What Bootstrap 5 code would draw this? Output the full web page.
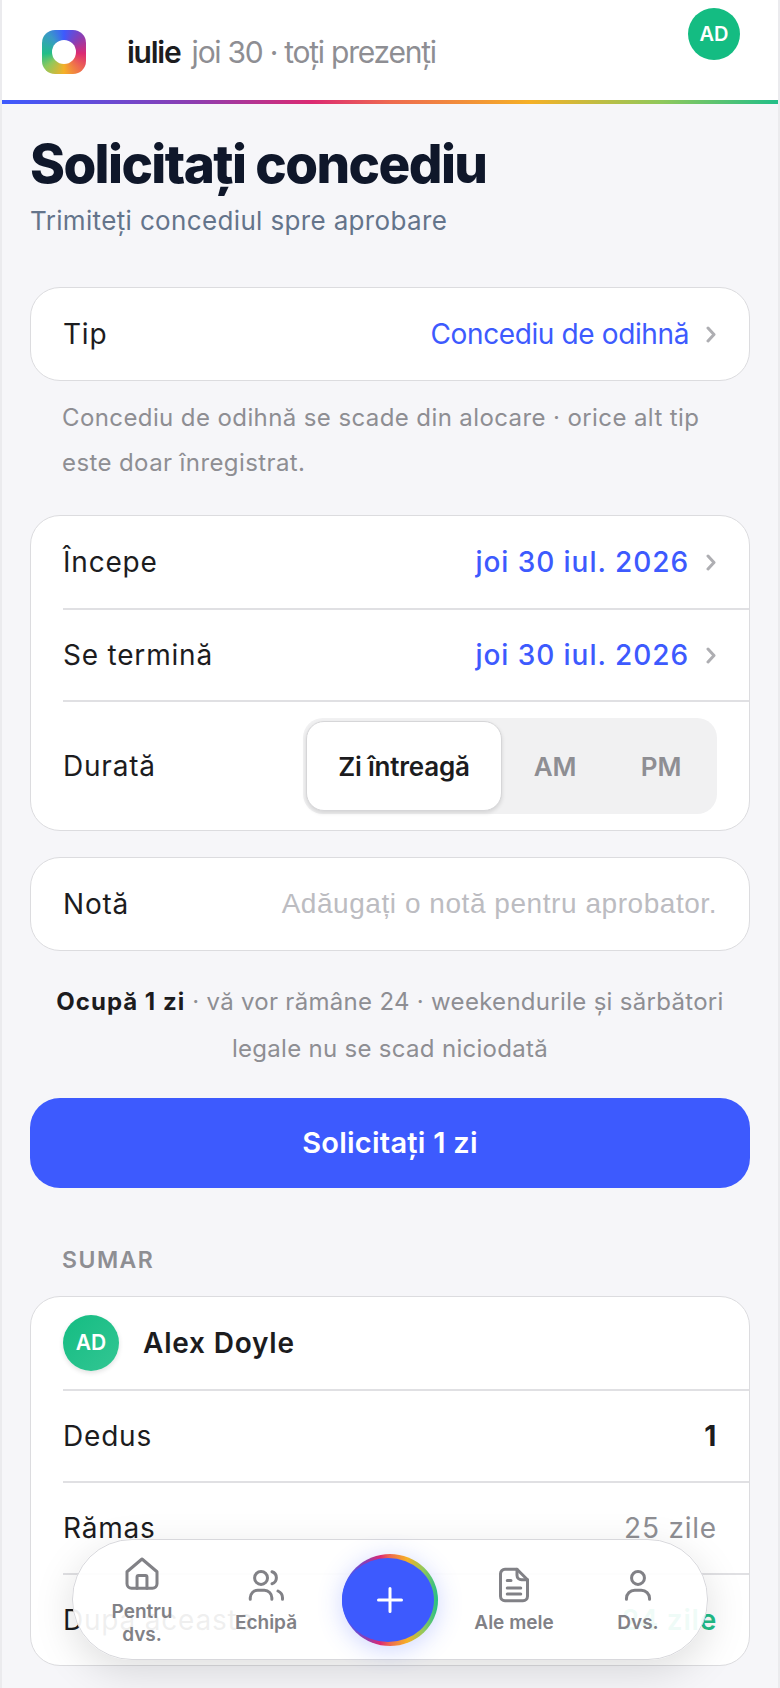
<!DOCTYPE html>
<html lang="ro">
<head>
    <meta charset="UTF-8">
    <title>Solicitați concediu</title>
    <link href="https://cdn.jsdelivr.net/npm/bootstrap@5.3.2/dist/css/bootstrap.min.css" rel="stylesheet">
    <style>
        html, body {
            height: 1688px;
            overflow: hidden;
        }
        body {
            background-color: #ebebee;
            font-family: Inter, "Liberation Sans", sans-serif;
            color: #1c1c1e;
            position: relative;
        }
        .page-shell {
            margin: 0 2px;
            height: 1688px;
            background: #f6f6f9;
        }
        .top-strip {
            height: 100px;
            background: #fff;
            padding: 0 38px 0 40px;
        }
        .brand-mark {
            width: 44px;
            height: 44px;
            border-radius: 13px;
            background: conic-gradient(#3d5afe 0deg, #8e3db0 50deg, #dc2a72 95deg, #ee6a50 135deg, #f5b027 180deg, #8fc85c 230deg, #22be88 265deg, #3a98c8 320deg, #3d5afe 360deg);
            margin-top: 30px;
        }
        .brand-mark span {
            width: 24px;
            height: 24px;
            background: #fff;
            border-radius: 50%;
        }
        .strip-text {
            margin: 31px 0 0 41px;
            font-size: 30px;
            line-height: 42px;
            letter-spacing: -1.25px;
            color: #8e8e93;
        }
        .strip-text b {
            color: #1c1c1e;
            font-weight: 600;
            margin-right: 4px;
        }
        .user-dot {
            width: 52px;
            height: 52px;
            border-radius: 50%;
            background: #14bc82;
            color: #fff;
            font-weight: 600;
            font-size: 20px;
            margin-top: 8px;
        }
        .rainbow-line {
            height: 4px;
            background: linear-gradient(90deg, #3d5afe, #8e3db0 25%, #dc2a72 40%, #ee6a50 50%, #f5b027 68%, #8fc85c 85%, #22be88);
        }
        .content-area {
            padding: 0 28px;
        }
        .page-title {
            margin: 27px 0 0;
            font-size: 53px;
            line-height: 66px;
            font-weight: 800;
            letter-spacing: -1.6px;
            color: #0f172a;
        }
        .page-sub {
            margin: 6px 0 0;
            font-size: 26px;
            line-height: 36px;
            color: #64748b;
            letter-spacing: .35px;
        }
        .panel {
            background: #fff;
            border: 1px solid #dcdcdf;
            border-radius: 30px;
            overflow: hidden;
        }
        .panel-tip { margin-top: 48px; }
        .panel-dates { margin-top: 30px; }
        .panel-note { margin-top: 26px; }
        .panel-sum { margin-top: 20px; }
        .panel-row {
            height: 92px;
            margin-left: 32px;
            padding-right: 32px;
            font-size: 28px;
            letter-spacing: .8px;
        }
        .panel-row + .panel-row {
            border-top: 2px solid #e0e0e3;
        }
        .row-link {
            color: #3d5afe;
            letter-spacing: -.38px;
        }
        .row-link.strong {
            font-weight: 500;
            letter-spacing: .95px;
        }
        .chev {
            width: 10px;
            height: 17px;
            margin: 0 1px 0 17px;
            fill: none;
            stroke: #aeaeb2;
            stroke-width: 3;
            stroke-linecap: round;
            stroke-linejoin: round;
        }
        .hint-text {
            margin: 14px 32px 0;
            font-size: 24px;
            line-height: 45px;
            letter-spacing: .4px;
            color: #8e8e93;
        }
        .seg-row {
            height: 130px;
        }
        .seg-box {
            width: 414px;
            height: 96px;
            background: #f1f1f2;
            border-radius: 20px;
            padding: 3px;
        }
        .seg-on {
            width: 196px;
            background: #fff;
            border: 1px solid #d6d6d8;
            border-radius: 18px;
            box-shadow: 0 2px 4px rgba(0, 0, 0, .12);
            font-weight: 600;
            font-size: 26px;
            letter-spacing: -.2px;
            color: #1c1c1e;
        }
        .seg-off {
            width: 106px;
            font-weight: 600;
            font-size: 26px;
            letter-spacing: -.2px;
            color: #8e8e93;
        }
        .note-hint {
            font-family: "Liberation Sans", sans-serif;
            font-size: 28px;
            letter-spacing: .55px;
            color: #bcbcc1;
        }
        .count-text {
            margin: 27px 0 0;
            font-size: 24px;
            line-height: 47px;
            letter-spacing: .3px;
            color: #8e8e93;
            text-align: center;
        }
        .count-text b {
            color: #1c1c1e;
            font-weight: 700;
            letter-spacing: 1px;
        }
        .send-btn {
            width: 100%;
            height: 90px;
            margin-top: 26px;
            border: 0;
            border-radius: 30px;
            background: #3d5afe;
            color: #fff;
            font-size: 29px;
            font-weight: 600;
            letter-spacing: .25px;
        }
        .group-head {
            margin: 56px 32px 0;
            font-size: 23px;
            line-height: 32px;
            font-weight: 600;
            letter-spacing: 1.5px;
            color: #8e8e93;
        }
        .summary-name {
            font-weight: 600;
        }
        .person-dot {
            width: 56px;
            height: 56px;
            border-radius: 50%;
            background: linear-gradient(135deg, #14bc82, #33c693);
            box-shadow: 0 2px 5px rgba(0, 0, 0, .12);
            color: #fff;
            font-weight: 600;
            font-size: 21px;
            letter-spacing: 0;
            margin-right: 24px;
        }
        .muted-val {
            color: #8e8e93;
        }
        .green-val {
            color: #22be88;
            font-weight: 600;
        }
        .float-nav {
            position: absolute;
            left: 72px;
            top: 1539px;
            width: 636px;
            height: 121px;
            background: rgba(255, 255, 255, .93);
            border: 1px solid #d8d8dc;
            border-radius: 60px;
            box-shadow: 0 12px 40px rgba(0, 0, 0, .13);
            padding: 2px 7px 0;
        }
        .nav-cell {
            width: 124px;
            padding: 0 14px;
            gap: 8px;
            font-size: 19px;
            line-height: 23px;
            font-weight: 600;
            color: #818186;
            text-align: center;
        }
        .nav-cell svg {
            width: 36px;
            height: 36px;
            flex-shrink: 0;
            fill: none;
            stroke: #818186;
            stroke-width: 2;
            stroke-linecap: round;
            stroke-linejoin: round;
        }
        .add-btn {
            width: 96px;
            height: 92px;
            margin: -2px 14px 0;
            padding: 4px 4px 4px 0;
            border-radius: 50%;
            background: linear-gradient(90deg, #3d5afe, #8e3db0 25%, #dc2a72 40%, #ee6a50 50%, #f5b027 68%, #8fc85c 85%, #22be88);
            box-shadow: 0 4px 24px rgba(61, 90, 254, .25);
        }
        .add-btn span {
            background: #3d5afe;
            border-radius: 50%;
            padding-left: 4px;
        }
        .add-btn svg {
            width: 26px;
            height: 26px;
            fill: none;
            stroke: #fff;
            stroke-width: 3;
            stroke-linecap: round;
        }
    </style>
</head>
<body>

<div class="page-shell">
    <div class="top-strip d-flex align-items-start">
        <div class="brand-mark d-flex align-items-center justify-content-center"><span></span></div>
        <div class="strip-text flex-grow-1"><b>iulie</b> joi 30 · toți prezenți</div>
        <div class="user-dot d-flex align-items-center justify-content-center">AD</div>
    </div>
    <div class="rainbow-line"></div>

    <div class="content-area">
        <h1 class="page-title">Solicitați concediu</h1>
        <p class="page-sub">Trimiteți concediul spre aprobare</p>

        <div class="panel panel-tip">
            <div class="panel-row d-flex align-items-center justify-content-between">
                <span>Tip</span>
                <span class="d-flex align-items-center row-link">Concediu de odihnă
                    <svg class="chev" viewBox="0 0 10 17"><path d="M2 2l6 6.5-6 6.5"/></svg>
                </span>
            </div>
        </div>
        <p class="hint-text">Concediu de odihnă se scade din alocare · orice alt tip este doar înregistrat.</p>

        <div class="panel panel-dates">
            <div class="panel-row d-flex align-items-center justify-content-between">
                <span>Începe</span>
                <span class="d-flex align-items-center row-link strong">joi 30 iul. 2026
                    <svg class="chev" viewBox="0 0 10 17"><path d="M2 2l6 6.5-6 6.5"/></svg>
                </span>
            </div>
            <div class="panel-row d-flex align-items-center justify-content-between">
                <span>Se termină</span>
                <span class="d-flex align-items-center row-link strong">joi 30 iul. 2026
                    <svg class="chev" viewBox="0 0 10 17"><path d="M2 2l6 6.5-6 6.5"/></svg>
                </span>
            </div>
            <div class="panel-row seg-row d-flex align-items-center justify-content-between">
                <span>Durată</span>
                <div class="seg-box d-flex">
                    <div class="seg-on d-flex align-items-center justify-content-center">Zi întreagă</div>
                    <div class="seg-off d-flex align-items-center justify-content-center">AM</div>
                    <div class="seg-off d-flex align-items-center justify-content-center">PM</div>
                </div>
            </div>
        </div>

        <div class="panel panel-note">
            <div class="panel-row d-flex align-items-center justify-content-between">
                <span>Notă</span>
                <span class="note-hint">Adăugați o notă pentru aprobator.</span>
            </div>
        </div>

        <p class="count-text"><b>Ocupă 1 zi</b> · vă vor rămâne 24 · weekendurile și sărbători<br>legale nu se scad niciodată</p>

        <button class="send-btn" type="button">Solicitați 1 zi</button>

        <div class="group-head">SUMAR</div>
        <div class="panel panel-sum">
            <div class="panel-row d-flex align-items-center">
                <div class="person-dot d-flex align-items-center justify-content-center">AD</div>
                <span class="summary-name">Alex Doyle</span>
            </div>
            <div class="panel-row d-flex align-items-center justify-content-between">
                <span>Dedus</span>
                <span class="fw-bold">1</span>
            </div>
            <div class="panel-row d-flex align-items-center justify-content-between">
                <span>Rămas</span>
                <span class="muted-val">25 zile</span>
            </div>
            <div class="panel-row d-flex align-items-center justify-content-between">
                <span>După aceasta</span>
                <span class="green-val">24 zile</span>
            </div>
        </div>
    </div>
</div>

<nav class="float-nav d-flex align-items-center">
    <div class="nav-cell d-flex flex-column align-items-center">
        <svg viewBox="0 0 24 24"><path d="M2 10.5 12 2l10 8.5v8a3 3 0 0 1-3 3H5a3 3 0 0 1-3-3z"/><path d="M8.7 21.5V14a1 1 0 0 1 1-1h4.6a1 1 0 0 1 1 1v7.5"/></svg>
        <span>Pentru dvs.</span>
    </div>
    <div class="nav-cell d-flex flex-column align-items-center">
        <svg viewBox="0 0 24 24"><circle cx="8.7" cy="7.3" r="4.3"/><path d="M1.5 21.5v-1a5 5 0 0 1 5-5h4.4a5 5 0 0 1 5 5v1"/><path d="M16 3.2a4.2 4.2 0 0 1 0 8"/><path d="M20 16a5 5 0 0 1 3 4.6v.9"/></svg>
        <span>Echipă</span>
    </div>
    <div class="add-btn d-flex">
        <span class="flex-grow-1 d-flex align-items-center justify-content-center">
            <svg viewBox="0 0 26 26"><path d="M13 1.5v23M1.5 13h23"/></svg>
        </span>
    </div>
    <div class="nav-cell d-flex flex-column align-items-center">
        <svg viewBox="0 0 24 24"><path d="M14 1.5H6a3 3 0 0 0-3 3v15a3 3 0 0 0 3 3h12a3 3 0 0 0 3-3V8.5z"/><path d="M14 1.5v4a3 3 0 0 0 3 3h4"/><path d="M7.5 9H10M7.5 14h9M7.5 18h9"/></svg>
        <span>Ale mele</span>
    </div>
    <div class="nav-cell d-flex flex-column align-items-center">
        <svg viewBox="0 0 24 24"><circle cx="12" cy="7.3" r="4.3"/><path d="M4.3 21.5V21a5.5 5.5 0 0 1 5.5-5.5h4.4a5.5 5.5 0 0 1 5.5 5.5v.5"/></svg>
        <span>Dvs.</span>
    </div>
</nav>

<script src="https://cdn.jsdelivr.net/npm/bootstrap@5.3.2/dist/js/bootstrap.bundle.min.js"></script>
</body>
</html>
